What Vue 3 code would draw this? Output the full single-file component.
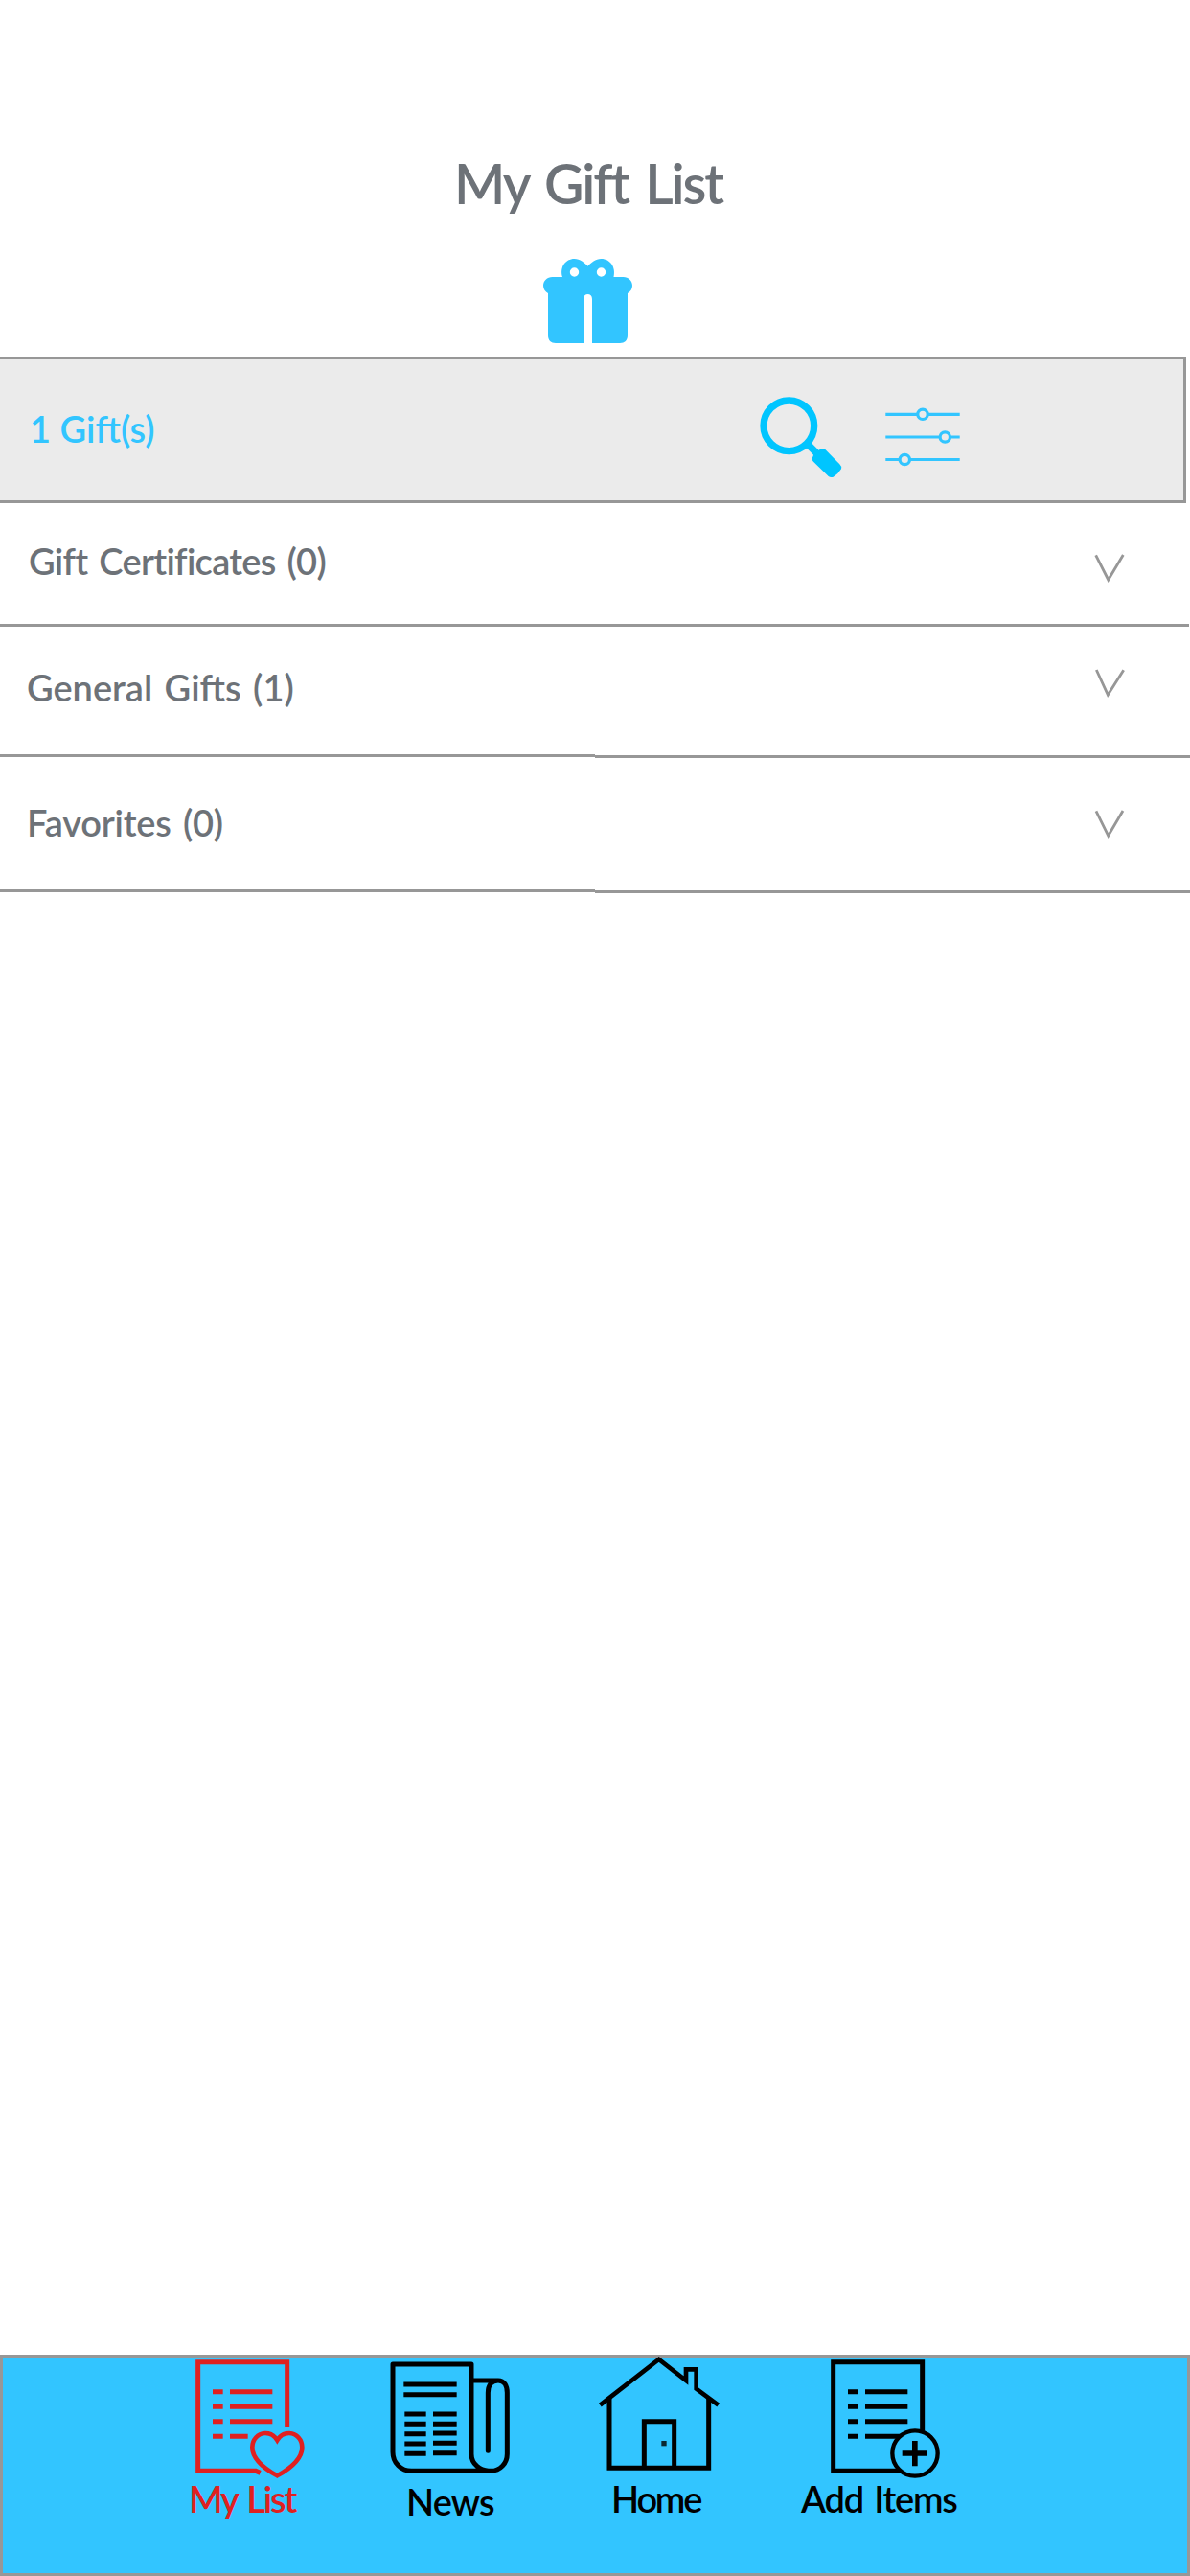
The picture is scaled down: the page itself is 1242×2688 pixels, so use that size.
<script setup>
import { ref } from 'vue'

const sections = [
  { key: 'certificates', label: 'Gift Certificates (0)', chevron: 'M2.7 3.3 L15.7 29 L31.3 3', line: [1.5, 1.5, 1240.5] },
  { key: 'general', label: 'General Gifts (1)', chevron: 'M3.3 3 L15.3 29 L31.7 3.3', line: [1.5, 2.5, 1242] },
  { key: 'favorites', label: 'Favorites (0)', chevron: 'M3 3.3 L15.7 29 L31 3', line: [1.5, 2.5, 1242] },
]
const active = ref('list')
const listRows = [167, 214, 260]
const newsRows = [237, 268, 299, 330, 361]
</script>

<template>
  <main class="screen">
    <header class="header">
      <h1 class="title">My Gift List</h1>
      <svg class="gift" width="93" height="88" viewBox="0 0 93 88">
        <path fill="#32c5ff" fill-rule="evenodd" d="M9.500 19H20C17 9 23 0 32.500 0C38.500 0 43 4 46.500 7.700C50 4 54.500 0 60.500 0C70 0 76 9 73.500 19H83.500C89 19 93 23 93 28C93 31.500 91 34.500 88 36V80C88 85 85 88 80 88H51V42C51 38.800 49 37 46.500 37C44 37 42 38.800 42 42V88H13C8 88 5 85 5 80V36C2 34.500 0 31.500 0 28C0 23 4 19 9.500 19ZM32.500 9.300a4.700 4.700 0 1 0 0 9.400a4.700 4.700 0 1 0 0-9.400ZM60.500 9.300a4.700 4.700 0 1 0 0 9.400a4.700 4.700 0 1 0 0-9.400Z" />
      </svg>
    </header>

    <section class="toolbar">
      <span class="count">1 Gift(s)</span>
      <svg class="search" width="86" height="85" viewBox="0 0 258 255">
        <circle cx="91" cy="91" r="79" fill="none" stroke="#00c5ff" stroke-width="22" />
        <path d="M147 145L180 178" stroke="#00c5ff" stroke-width="22" />
        <path d="M168 181L191 163Q198 161 205 165L250 211Q257 217 255 226Q246 242 230 251Q221 254 215 249L168 203Q162 197 164 191Q168 187 168 181Z" fill="#00c5ff" />
      </svg>
      <svg class="sliders" width="78" height="62" viewBox="0 0 78 62" fill="none" stroke="#32c5ff" stroke-width="3.200">
        <path d="M.3 7.300H33.700M44.300 7.300H77.700M.3 31H57M67.600 31H77.700M.3 54.500H15M25.700 54.500H77.700" />
        <circle cx="39" cy="7.300" r="5.200" />
        <circle cx="62.300" cy="31" r="5.200" />
        <circle cx="20.300" cy="54.500" r="5.200" />
      </svg>
    </section>

    <section v-for="s in sections" :key="s.key" class="row" :class="s.key">
      <div class="row-body">
        <span class="row-label">{{ s.label }}</span>
        <svg class="chevron" width="34" height="34" viewBox="0 0 34 34">
          <path :d="s.chevron" fill="none" stroke="#979797" stroke-width="2.800" />
        </svg>
      </div>
      <svg class="rule" width="1242" height="4" viewBox="0 0 1242 4" shape-rendering="crispEdges">
        <path :d="`M0 0H621V${s.line[1] - 1.5}H${s.line[2]}V${s.line[1] + 1.5}H621V3H0Z`" fill="#979797" />
      </svg>
    </section>

    <nav class="tabs">
      <a class="tab tab-list" :class="{ active: active === 'list' }" @click="active = 'list'">
        <svg width="114" height="124" viewBox="73 60 342 372" fill="none" stroke="currentColor" stroke-width="15">
          <path d="M360 276V74H81V415H262L276 421" />
          <path v-for="y in listRows" :key="y" :d="`M127 ${y}H159M181 ${y}H314`" />
          <path d="M127 307H159M181 307H237" />
          <path stroke-width="14" d="M329 319C315 296 298 297 291 297C268 298 251 317 251 341C251 379 295 411 329 430C363 411 407 379 407 341C407 317 390 298 367 297C360 297 343 296 329 319Z" />
        </svg>
        <span>My List</span>
      </a>
      <a class="tab tab-news" :class="{ active: active === 'news' }" @click="active = 'news'">
        <svg width="125" height="127" viewBox="81 60 375 381" fill="none" stroke="currentColor" stroke-width="15">
          <path d="M336 362V81H90V356C90 390 116 415 148 415H397C426 415 448 391 448 362V170C448 148 439 132 420 132H342M336 362C336 393 363 415 397 415M420 132C400 132 388 146 388 170V352" stroke-linejoin="round" stroke-linecap="round" />
          <path d="M124 144H290M124 176H290" />
          <path v-for="y in newsRows" :key="y" :d="`M127 ${y}H194M216 ${y > 290 ? y - 2 : y}H290`" />
        </svg>
        <span>News</span>
      </a>
      <a class="tab tab-home" :class="{ active: active === 'home' }" @click="active = 'home'">
        <svg width="124" height="124" viewBox="80 60 372 372" fill="none" stroke="currentColor" stroke-width="14">
          <path d="M81 209L265 66L350 132V97H382V158L451 209" />
          <path d="M110 188V406H421V188M219 406V260H313V406" stroke-width="15" />
          <path d="M273 329H289" stroke-width="16" opacity=".8" />
        </svg>
        <span>Home</span>
      </a>
      <a class="tab tab-add" :class="{ active: active === 'add' }" @click="active = 'add'">
        <svg width="114" height="124" viewBox="142 60 342 372" fill="none" stroke="currentColor" stroke-width="15">
          <path d="M429 290V74H150V415H358" />
          <path v-for="y in listRows" :key="y" :d="`M196 ${y}H228M250 ${y}H383`" />
          <path d="M196 307H228M250 307H358" />
          <circle cx="406" cy="360" r="71" stroke-width="13" />
          <path d="M366 360H445M405.500 321V400" stroke-width="17" />
        </svg>
        <span>Add Items</span>
      </a>
    </nav>
  </main>
</template>

<style>
body {
  margin: 0;
  background: #fff;
}
</style>

<style scoped>
.screen {
  display: flex;
  flex-direction: column;
  width: 1242px;
  height: 2688px;
  overflow: hidden;
  background: #fff;
  color: #6d7278;
  font: 600 38px/46px Lato, sans-serif;
}
svg {
  display: block;
  flex: none;
  overflow: visible;
}
.header {
  box-sizing: border-box;
  flex: none;
  height: 372px;
  padding-top: 157px;
}
.title {
  margin: 0 0 0 474px;
  height: 113px;
  font-size: 57px;
  font-weight: 600;
  line-height: 68px;
  letter-spacing: -2.1px;
  word-spacing: 5px;
  white-space: nowrap;
}
.gift {
  margin-left: 567px;
}
.toolbar {
  box-sizing: border-box;
  flex: none;
  display: flex;
  width: 1237.5px;
  height: 153px;
  border: solid #979797;
  border-width: 3px 3px 3px 0;
  background: #ebebeb;
}
.count {
  width: 762px;
  padding: 49px 0 0 31px;
  color: #32c5ff;
}
.search {
  margin-top: 39px;
}
.sliders {
  margin: 50px 0 0 45px;
}
.row {
  flex: none;
}
.row-body {
  display: flex;
  box-sizing: border-box;
  align-items: flex-start;
}
.row-label {
  width: 1111px;
  word-spacing: 3px;
}
.certificates .row-body { height: 126px; padding: 37px 0 0 30px; }
.certificates .row-label { letter-spacing: -.7px; }
.certificates .chevron { margin-top: 14px; }
.general .row-body { height: 132px; padding: 39px 0 0 28px; }
.general .row-label { width: 1113px; }
.general .chevron { margin-top: 2px; }
.favorites .row-body { height: 137px; padding: 44px 0 0 28px; }
.favorites .row-label { width: 1113px; letter-spacing: -.2px; }
.favorites .chevron { margin-top: 8px; }
.tabs {
  box-sizing: border-box;
  flex: none;
  display: flex;
  height: 231px;
  margin-top: auto;
  border: 3px solid #979797;
  background: #32c5ff;
}
.tab {
  flex: none;
  color: #000;
  cursor: pointer;
}
.tab span {
  display: block;
  white-space: nowrap;
  word-spacing: 3px;
}
.tab.active {
  color: #e02020;
}
.tab-list { width: 203px; margin-left: 201px; }
.tab-list span { margin-left: -7px; letter-spacing: -2.1px; }
.tab-news { width: 219px; }
.tab-news span { margin-left: 17px; letter-spacing: -.85px; }
.tab-home { width: 241px; }
.tab-home span { margin-left: 12px; letter-spacing: -2.2px; }
.tab-add { width: 180px; }
.tab-add span { margin-left: -31px; letter-spacing: -1.2px; }
</style>
